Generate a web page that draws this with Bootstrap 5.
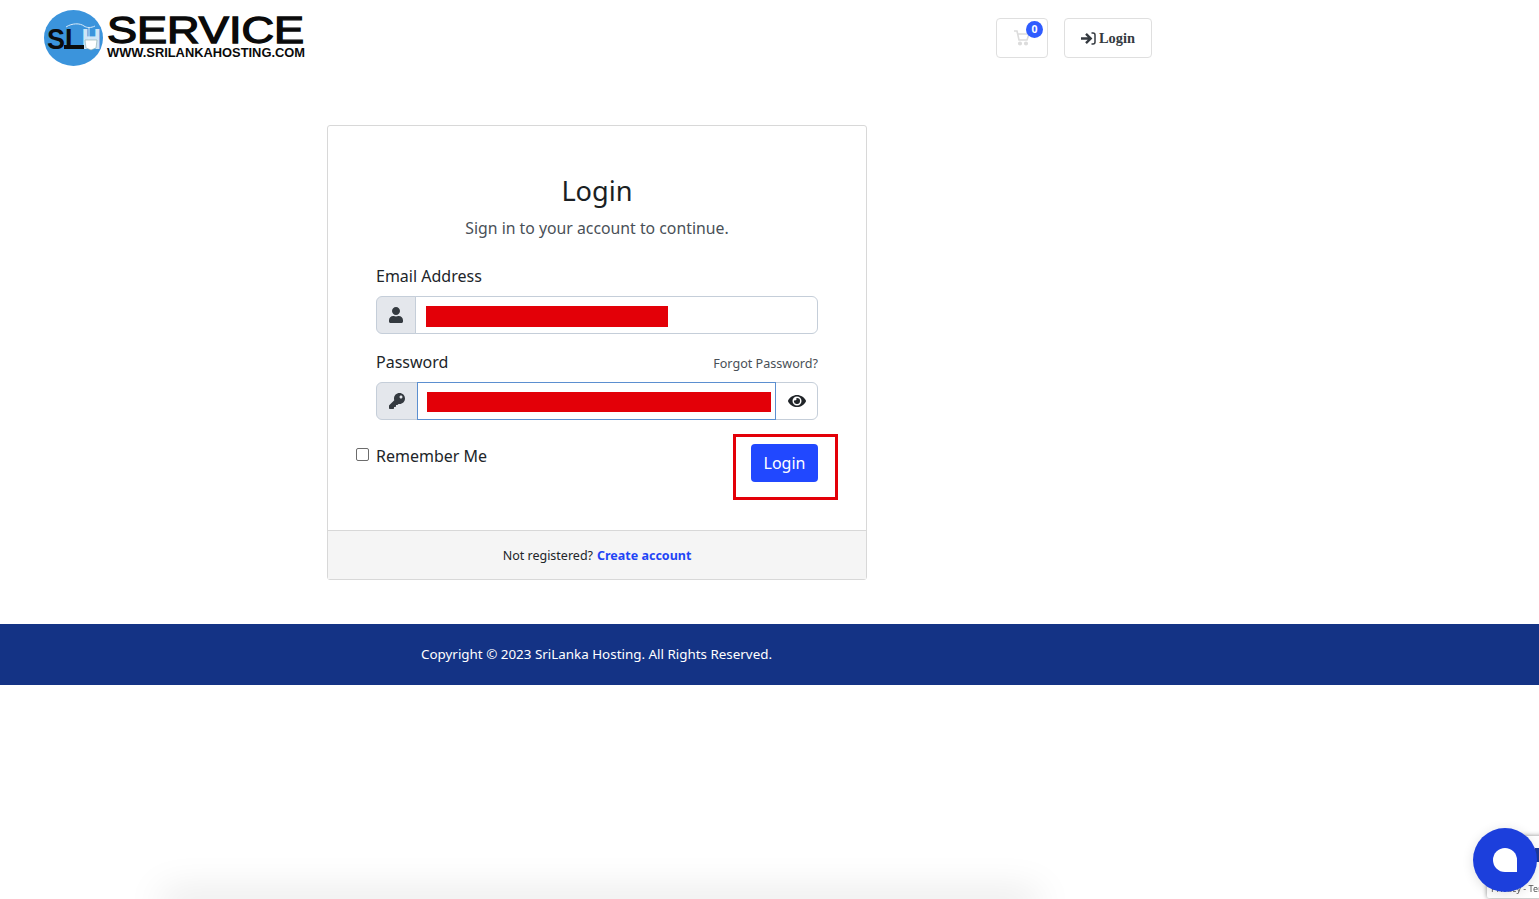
<!DOCTYPE html>
<html lang="en">
<head>
<meta charset="utf-8">
<title>Login</title>
<link href="https://cdn.jsdelivr.net/npm/bootstrap@5.3.0/dist/css/bootstrap.min.css" rel="stylesheet">
<style>
html,body{height:100%;overflow:hidden}
body{font-family:"Noto Sans","Open Sans",sans-serif;color:#212529;background:#fff}
.site-top{height:80px;padding-left:44px;padding-top:10px;align-items:flex-start}
.brand-logo{width:262px;height:58px;display:block}
.top-actions{margin-left:690px;margin-top:8px;gap:16px}
.cart-btn,.top-login{height:40px;border:1px solid #dfdfdf;border-radius:4px;background:#fff;display:flex;align-items:center;justify-content:center;padding:0}
.cart-btn{width:52px;position:relative}
.cart-count{position:absolute;top:2px;right:4px;width:17px;height:17px;border-radius:50%;background:#2f5cff;color:#fff;font-size:10.5px;font-weight:700;line-height:17px;text-align:center}
.top-login{width:88px;gap:3px;font-family:"Liberation Serif",serif;font-weight:700;font-size:14.4px;color:#343a40;padding-top:1px}
.page-main{padding-top:45px;padding-left:327px}
.login-box{width:540px;height:455px;border-color:#d8d8d8;border-radius:3px}
.login-body{padding:48px 48px 0;position:relative}
.login-title{font-size:27.2px;font-weight:400;line-height:34px;margin:0 0 8px;color:#1b1f23;text-align:center}
.login-sub{font-size:15.8px;line-height:24px;color:#495057;margin:0 0 24px;text-align:center}
.field-label{font-size:16px;line-height:24px;margin:0 0 8px;color:#212529}
.field-row{height:38px;margin-bottom:16px}
.field-row .input-group-text{background:#e4e7ec;border-color:#c5ced9;justify-content:center;padding:0}
.field-row .form-control{border-color:#c5ced9;display:flex;align-items:center;height:38px;padding:2px 4px 0 10px}
.addon-mail{width:40px}
.addon-key{width:42px}
.field-row .row-focus.form-control{border-color:#5b8fd0;margin-left:-1px;z-index:3;padding:2px 4px 0 9px;position:relative;flex:0 0 359px;width:359px}
.addon-eye.input-group-text{background:#fff;flex:1 1 auto;margin-left:-1px}
.redact{background:#e30008;height:21px;display:block}
.redact-mail{width:242px}
.redact-pass{width:100%;height:20px}
.forgot-link{font-size:12.6px;color:#495057;text-decoration:none;line-height:20px;padding-top:4px}
.remember-row{margin-left:-20px;padding-top:8px}
.remember-row .form-check-input{width:13px;height:13px;margin:-4px 0 0;border-color:#6c6c6c;border-radius:2px}
.remember-row label{font-size:16px;line-height:24px}
.remember-check{gap:7px;margin-top:0}
.btn-enter{background:#2148ff;border:0;color:#fff;width:67px;height:38px;font-size:16px;padding:0;border-radius:4px}
.mark-box{position:absolute;left:405px;top:308px;width:105px;height:66px;border:3px solid #e30008;pointer-events:none}
.login-foot{height:49px;background:#f5f5f5;border-top:1px solid #d8d8d8;font-size:12.5px;color:#212529;display:flex;align-items:center;justify-content:center;gap:4px;margin-top:auto;padding-top:3px}
.login-foot a{color:#1f45f5;font-weight:700;text-decoration:none}
.site-foot{margin-top:44px;height:61px;background:#143385;color:#fff;font-size:13.4px;padding-left:421px;display:flex;align-items:center}
.chat-fab{position:fixed;left:1473px;top:828px;width:64px;height:64px;border-radius:50%;background:#1c3fdc;display:flex;align-items:center;justify-content:center;box-shadow:0 2px 12px rgba(0,0,0,.12);z-index:5}
.chat-drop{width:24px;height:24px;background:#fff;border-radius:50% 50% 0 50%}
.recap-badge{position:fixed;left:1487px;top:836px;width:256px;height:62px;background:#fff;border-radius:2px;box-shadow:0 0 5px rgba(0,0,0,.45);font-size:9px;color:#555;padding:47px 0 0 4px;line-height:12px;white-space:nowrap;z-index:4}
.recap-edge{position:absolute;left:48px;top:12px;width:12px;height:14px;background:#1c3a9e}
.under-shadow{position:fixed;left:170px;top:899px;width:860px;height:10px;box-shadow:0 0 38px 8px rgba(0,0,0,.1)}
</style>
</head>
<body>
<header class="d-flex site-top">
  <svg class="brand-logo" viewBox="0 0 262 58" role="img" aria-label="Service logo">
    <ellipse cx="29.500" cy="28" rx="29.500" ry="28" fill="#3b94dc"/>
    <text x="3" y="39" font-family="Liberation Sans" font-weight="700" font-size="30" textLength="54" lengthAdjust="spacingAndGlyphs" fill="#0c0c0c">SL<tspan fill="#cfe5f7">H</tspan></text>
    <path d="M22 17c6-4 14-4 18-1 3 2 7 2 11 0M45 17v13" fill="none" stroke="#d8eaf9" stroke-width="1"/>
    <path d="M41 30h12l-1 8-5 2-5-2z" fill="#fff" stroke="#8aa" stroke-width=".6"/>
    <rect x="20" y="35" width="20" height="4" fill="#0c0c0c"/>
    <text x="63" y="33" font-family="Liberation Sans" font-size="36" stroke="#0a0a0a" stroke-width="1.300" textLength="197" lengthAdjust="spacingAndGlyphs" fill="#0a0a0a">SERVICE</text>
    <text x="63" y="47" font-family="Liberation Sans" font-weight="700" font-size="13" textLength="198" lengthAdjust="spacingAndGlyphs" fill="#0a0a0a">WWW.SRILANKAHOSTING.COM</text>
  </svg>
  <div class="d-flex top-actions">
    <button class="cart-btn" type="button" aria-label="Cart">
      <svg width="18" height="16" viewBox="0 0 18 16" fill="none" stroke="#dcdcdc" stroke-width="1.600"><path d="M1 1h3l2 9h8l2-6H5"/><circle cx="7" cy="13.500" r="1.300" fill="#dcdcdc"/><circle cx="13" cy="13.500" r="1.300" fill="#dcdcdc"/></svg>
      <span class="cart-count">0</span>
    </button>
    <button class="top-login" type="button">
      <svg width="15" height="13" viewBox="0 0 15 13" fill="none" stroke="#343a40" stroke-width="2.400"><path d="M0 6.500h8.500M5 1.800l4.700 4.700L5 11.200"/><path d="M10.500 1h1.500c1.500 0 2 1 2 2v7c0 1-.5 2-2 2h-1.500" stroke-width="1.500"/></svg>
      Login
    </button>
  </div>
</header>
<main class="page-main">
  <div class="card login-box">
    <div class="login-body">
      <h1 class="login-title">Login</h1>
      <p class="login-sub">Sign in to your account to continue.</p>
      <div class="field-label">Email Address</div>
      <div class="input-group field-row">
        <span class="input-group-text addon-mail">
          <svg width="14" height="16" viewBox="0 0 448 512" fill="#343a40"><path d="M224 256c70.700 0 128-57.300 128-128S294.700 0 224 0 96 57.300 96 128s57.300 128 128 128zm89.600 32h-16.700c-22.200 10.200-46.900 16-72.900 16s-50.600-5.800-72.900-16h-16.700C60.200 288 0 348.200 0 422.400V464c0 26.500 21.500 48 48 48h352c26.500 0 48-21.500 48-48v-41.600c0-74.200-60.200-134.400-134.400-134.400z"/></svg>
        </span>
        <div class="form-control"><span class="redact redact-mail"></span></div>
      </div>
      <div class="d-flex justify-content-between">
        <div class="field-label">Password</div>
        <a class="forgot-link" href="#">Forgot Password?</a>
      </div>
      <div class="input-group field-row">
        <span class="input-group-text addon-key">
          <svg width="16" height="16" viewBox="0 0 512 512" fill="#343a40"><path d="M512 176.001C512 273.203 433.202 352 336 352c-11.220 0-22.190-1.062-32.827-3.069l-24.012 27.014A23.999 23.999 0 0 1 261.223 384H224v40c0 13.255-10.745 24-24 24h-40v40c0 13.255-10.745 24-24 24H24c-13.255 0-24-10.745-24-24v-78.059c0-6.365 2.529-12.470 7.029-16.971l161.802-161.802C163.108 213.814 160 195.271 160 176 160 78.798 238.797.001 335.999 0 433.488-.001 512 78.511 512 176.001zM336 128c0 26.510 21.490 48 48 48s48-21.490 48-48-21.490-48-48-48-48 21.490-48 48z"/></svg>
        </span>
        <div class="form-control row-focus"><span class="redact redact-pass"></span></div>
        <span class="input-group-text addon-eye">
          <svg width="18" height="16" viewBox="0 0 576 512" fill="#212529"><path d="M572.520 241.400C518.290 135.590 410.930 64 288 64S57.680 135.640 3.480 241.410a32.350 32.350 0 0 0 0 29.190C57.710 376.410 165.070 448 288 448s230.320-71.640 284.520-177.410a32.350 32.350 0 0 0 0-29.190zM288 400a144 144 0 1 1 144-144 143.930 143.930 0 0 1-144 144zm0-240a95.310 95.310 0 0 0-25.310 3.790 47.850 47.850 0 0 1-66.900 66.900A95.780 95.780 0 1 0 288 160z"/></svg>
        </span>
      </div>
      <div class="d-flex justify-content-between align-items-start remember-row">
        <div class="d-flex align-items-center remember-check">
          <input class="form-check-input" type="checkbox" id="remember">
          <label for="remember">Remember Me</label>
        </div>
        <button class="btn btn-enter" type="button">Login</button>
      </div>
      <div class="mark-box"></div>
    </div>
    <div class="login-foot"><span>Not registered?</span><a href="#">Create account</a></div>
  </div>
</main>
<footer class="site-foot">Copyright © 2023 SriLanka Hosting. All Rights Reserved.</footer>
<div class="under-shadow"></div>
<div class="recap-badge">Privacy - Terms<span class="recap-edge"></span></div>
<div class="chat-fab"><span class="chat-drop"></span></div>
</body>
</html>
